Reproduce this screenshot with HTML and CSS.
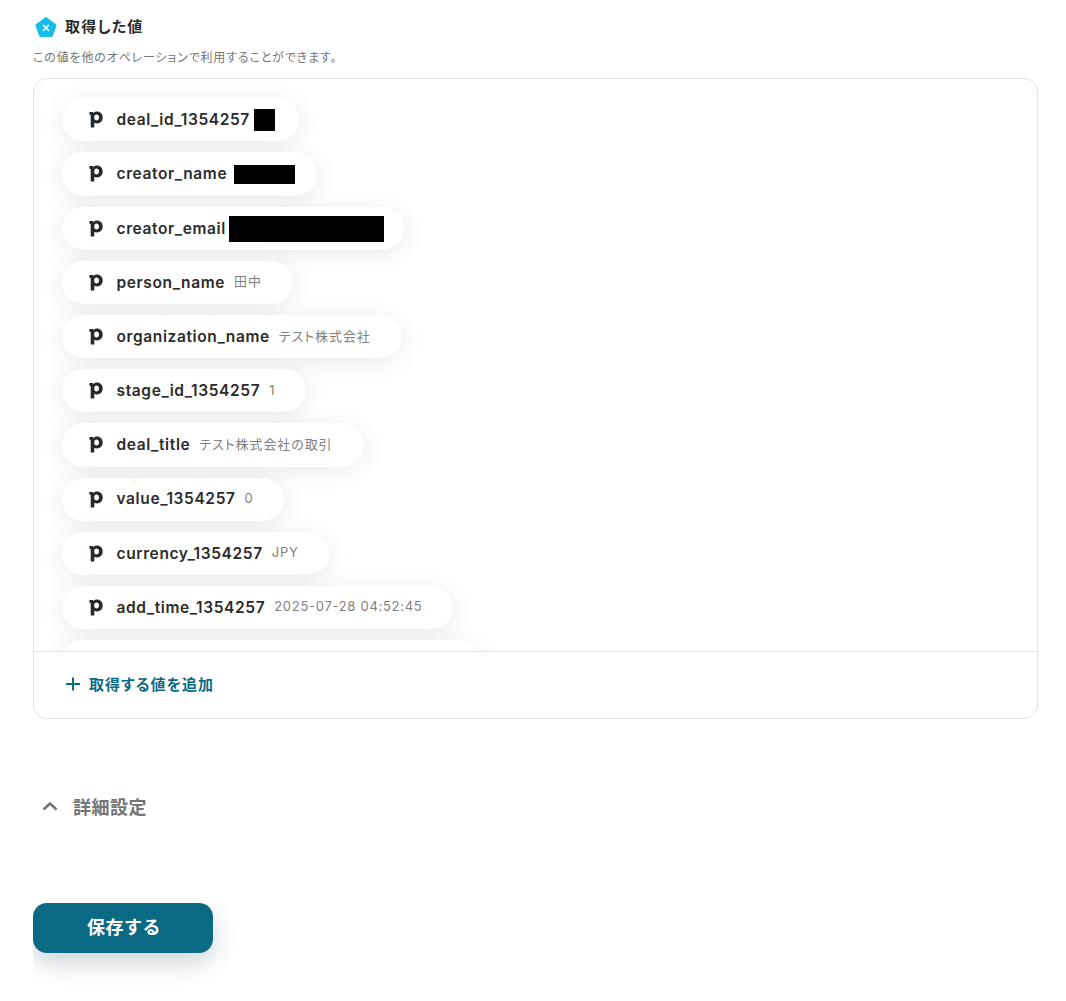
FILE: index.html
```html
<!DOCTYPE html>
<html lang="ja">
<head>
<meta charset="utf-8">
<title>取得した値</title>
<link rel="stylesheet" href="styles.css">
</head>
<body>
<main class="page">
  <div class="heading">
    <svg class="hex" viewBox="0 0 24 24" width="24" height="24"><path d="M12 1.5 L22.6 9.2 Q23.2 9.7 23 10.4 L19 21.6 Q18.7 22.5 17.8 22.5 L6.2 22.5 Q5.3 22.5 5 21.6 L1 10.4 Q.8 9.7 1.4 9.2 Z" fill="#14bdea" stroke="#14bdea" stroke-linejoin="round"/><path d="M9.2 10.2 L14.8 15.8 M14.8 10.2 L9.2 15.8" stroke="#fff" stroke-width="1.6" stroke-linecap="round"/></svg>
    <h2 class="title">取得した値</h2>
  </div>
  <p class="note">この値を他のオペレーションで利用することができます。</p>
  <section class="card">
    <div class="list">
      <div class="pill"><svg class="logo"><use href="#p"/></svg><span class="key">deal_id_1354257</span><span class="mask mask-a"></span></div>
      <div class="pill"><svg class="logo"><use href="#p"/></svg><span class="key">creator_name</span><span class="mask mask-b"></span></div>
      <div class="pill"><svg class="logo"><use href="#p"/></svg><span class="key">creator_email</span><span class="mask mask-c"></span></div>
      <div class="pill"><svg class="logo"><use href="#p"/></svg><span class="key">person_name</span><span class="val val-ja">田中</span></div>
      <div class="pill"><svg class="logo"><use href="#p"/></svg><span class="key">organization_name</span><span class="val val-ja">テスト株式会社</span></div>
      <div class="pill"><svg class="logo"><use href="#p"/></svg><span class="key">stage_id_1354257</span><span class="val">1</span></div>
      <div class="pill"><svg class="logo"><use href="#p"/></svg><span class="key">deal_title</span><span class="val val-ja">テスト株式会社の取引</span></div>
      <div class="pill"><svg class="logo"><use href="#p"/></svg><span class="key">value_1354257</span><span class="val">0</span></div>
      <div class="pill"><svg class="logo"><use href="#p"/></svg><span class="key">currency_1354257</span><span class="val">JPY</span></div>
      <div class="pill"><svg class="logo"><use href="#p"/></svg><span class="key">add_time_1354257</span><span class="val">2025-07-28 04:52:45</span></div>
      <div class="pill pill-last"></div>
    </div>
    <div class="add">
      <svg class="plus" viewBox="0 0 16 16" width="16" height="16"><path d="M8 1.5V14.5M1 8H15" stroke="#0b6a83" stroke-width="2"/></svg>
      <span>取得する値を追加</span>
    </div>
  </section>
  <div class="detail">
    <svg class="chev" viewBox="0 0 18 12" width="18" height="12"><path d="M2.5 9.5 L9 3.5 L15.5 9.5" fill="none" stroke="#757575" stroke-width="2.6"/></svg>
    <span>詳細設定</span>
  </div>
  <div class="actions"><button class="save">保存する</button></div>
</main>
<svg class="defs" width="0" height="0"><defs><symbol id="p" viewBox="0 0 14 18" preserveAspectRatio="none"><path fill-rule="evenodd" fill="#26292c" d="M0.4 1H3.9L4.3 2.2C5.2 1.2 6.4.6 7.9.6 11.3.6 13.7 3.2 13.7 6.9 13.7 10.7 11.2 13.2 8 13.2 6.9 13.2 6 12.9 5.3 12.4V17.6H1.7V4.6C1.7 4.2 1.5 4 1.1 4H.4ZM7.4 3.8C6.1 3.8 5.2 4.9 5.2 6.9 5.2 9 6.1 10.1 7.4 10.1 8.8 10.1 10 9 10 6.9 10 5.1 9 3.8 7.4 3.8Z"/></symbol></defs></svg>
</body>
</html>
```
FILE: styles.css
```css
* { box-sizing: border-box; }
html, body { margin: 0; background: #fff; overflow: hidden; }
body { font-family: Inter, "Noto Sans CJK JP", "Noto Sans", sans-serif; color: #2b2b2b; height: 1001px; font-feature-settings: "palt"; }
.page { padding: 15px 28px 0 33px; }
.heading { display: flex; align-items: center; gap: 8px; height: 24px; padding-left: 2px; }
.hex { flex: none; width: 22px; height: 22px; }
.title { margin: 0; font-size: 15px; font-weight: 600; line-height: 24px; letter-spacing: .08em; color: #2b2b2b; }
.note { margin: 10px 0 0; font-size: 12px; line-height: 18px; color: #757575; letter-spacing: .07em; }
.card { margin-top: 11px; height: 641px; border: 1px solid #e2e2e2; border-radius: 14px; display: flex; flex-direction: column; overflow: hidden; }
.list { height: 572px; overflow: hidden; padding: 19.2px 28px 0; flex: none; display: flex; flex-direction: column; align-items: flex-start; gap: 11px; }
.pill { flex: none; display: flex; align-items: center; height: 43.2px; padding: 0 22px 0 27px; border-radius: 22px; background: #fff; box-shadow: 0 4px 24px rgba(0,0,0,.09); }
.pill-last { width: 418px; }
.logo { width: 14px; height: 17px; flex: none; margin-right: 13.5px; }
.key { font-size: 15.5px; line-height: 20px; margin-top: .8px; font-weight: 600; letter-spacing: .04em; color: #2b2b2b; white-space: nowrap; }
.val { font-size: 13px; line-height: 18px; color: #808080; letter-spacing: .055em; margin: -2px 8.5px 0 9px; white-space: nowrap; }
.val-ja { letter-spacing: .07em; margin-right: 9.5px; }
.mask { display: block; background: #000; flex: none; }
.mask-a { width: 21px; height: 22px; margin-left: 4px; margin-right: 2px; }
.mask-b { width: 61px; height: 19px; margin: 2px 0 0 7px; }
.mask-c { width: 155px; height: 26px; margin: 1px -2px 0 3px; }
.add { flex: 1; border-top: 1px solid #e2e2e2; display: flex; align-items: center; gap: 8px; padding: 0 0 3px 31px; font-size: 15px; font-weight: 600; color: #0b6a83; letter-spacing: .07em; }
.plus { flex: none; }
.detail { margin-top: 75px; display: flex; align-items: center; gap: 14px; padding-left: 8px; height: 24px; font-size: 18px; font-weight: 600; color: #757575; letter-spacing: .03em; }
.chev { flex: none; }
.actions { margin-top: 85px; height: 98px; overflow: hidden; margin-right: -28px; }
.save { display: block; width: 180px; height: 50px; border: 0; border-radius: 14px; background: #0b6a83; color: #fff; font: 600 18px Inter, "Noto Sans CJK JP", sans-serif; letter-spacing: .03em; padding: 0 0 5px 2px; box-shadow: 0 10px 25px rgba(11,50,70,.2); }
.defs { position: absolute; }
```
